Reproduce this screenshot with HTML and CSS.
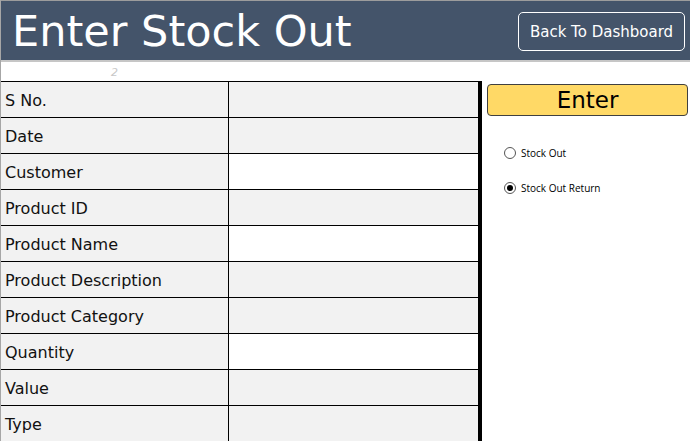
FILE: index.html
```html
<!DOCTYPE html>
<html>
<head>
<meta charset="utf-8">
<link rel="stylesheet" href="styles.css">
</head>
<body>
<div class="page">
  <header class="header">
    <h1 class="title">Enter Stock Out</h1>
    <button class="back-btn">Back To Dashboard</button>
  </header>
  <div class="main">
    <div class="left">
      <div class="hint">2</div>
      <div class="form">
        <div class="row"><div class="label">S No.</div><div class="value"></div></div>
        <div class="row"><div class="label">Date</div><div class="value"></div></div>
        <div class="row"><div class="label">Customer</div><div class="value white"></div></div>
        <div class="row"><div class="label">Product ID</div><div class="value"></div></div>
        <div class="row"><div class="label">Product Name</div><div class="value white"></div></div>
        <div class="row"><div class="label">Product Description</div><div class="value"></div></div>
        <div class="row"><div class="label">Product Category</div><div class="value"></div></div>
        <div class="row"><div class="label">Quantity</div><div class="value white"></div></div>
        <div class="row"><div class="label">Value</div><div class="value"></div></div>
        <div class="row"><div class="label">Type</div><div class="value"></div></div>
      </div>
    </div>
    <div class="right">
      <button class="enter-btn">Enter</button>
      <div class="radios">
        <label class="radio"><span class="circle"></span>Stock Out</label>
        <label class="radio"><span class="circle checked"></span>Stock Out Return</label>
      </div>
    </div>
  </div>
</div>
</body>
</html>
```
FILE: styles.css
```css
* { box-sizing: border-box; }
html, body { margin: 0; padding: 0; background: #fff; }
body { font-family: "DejaVu Sans", Verdana, sans-serif; width: 690px; height: 441px; overflow: hidden; }
.page { border-left: 1px solid #a6a6a6; height: 441px; }
.header {
  height: 62px;
  background: #44546a;
  border-top: 1px solid #9c9c9c;
  border-bottom: 2px solid #c6c6c6;
  display: flex;
  align-items: flex-start;
  justify-content: space-between;
}
.title {
  margin: 0;
  padding: 4px 0 0 11px;
  font-weight: normal;
  font-size: 43px;
  line-height: 52px;
  color: #fff;
}
.back-btn {
  margin: 11px 5px 0 0;
  width: 167px;
  height: 39px;
  background: transparent;
  border: 1px solid #fff;
  border-radius: 5px;
  color: #fff;
  font-family: "DejaVu Sans", Verdana, sans-serif;
  font-size: 15px;
  padding: 0;
}
.main { display: flex; }
.left { width: 481px; }
.hint {
  height: 19px;
  font-size: 11px;
  font-style: italic;
  color: #c8c8c8;
  padding-left: 110px;
  line-height: 21px;
}
.form {
  border-top: 1px solid #000;
  border-right: 4px solid #000;
}
.row {
  display: flex;
  height: 36px;
  border-bottom: 1px solid #000;
}
.label {
  width: 228px;
  border-right: 1px solid #000;
  background: #f2f2f2;
  font-size: 16px;
  color: #111;
  padding-left: 4px;
  padding-top: 1px;
  line-height: 35px;
}
.value { flex: 1; background: #f2f2f2; }
.value.white { background: #fff; }
.right { flex: 1; padding: 22px 0 0 5px; }
.enter-btn {
  display: block;
  width: 201px;
  height: 32px;
  background: #ffd966;
  border: 1px solid #404040;
  border-radius: 4px;
  font-family: "DejaVu Sans", Verdana, sans-serif;
  font-size: 23px;
  color: #000;
  padding: 0;
  line-height: 30px;
}
.radios {
  display: flex;
  flex-direction: column;
  gap: 24px;
  padding: 31px 0 0 17px;
}
.radio {
  display: flex;
  align-items: center;
  font-family: "Open Sans", sans-serif;
  font-size: 10px;
  color: #000;
  height: 11px;
}
.circle {
  width: 12px;
  height: 12px;
  border: 1px solid #555;
  border-radius: 50%;
  background: #fff;
  margin-right: 5px;
  position: relative;
}
.circle.checked::after {
  content: "";
  position: absolute;
  left: 2px; top: 2px;
  width: 6px; height: 6px;
  border-radius: 50%;
  background: #000;
}
```
